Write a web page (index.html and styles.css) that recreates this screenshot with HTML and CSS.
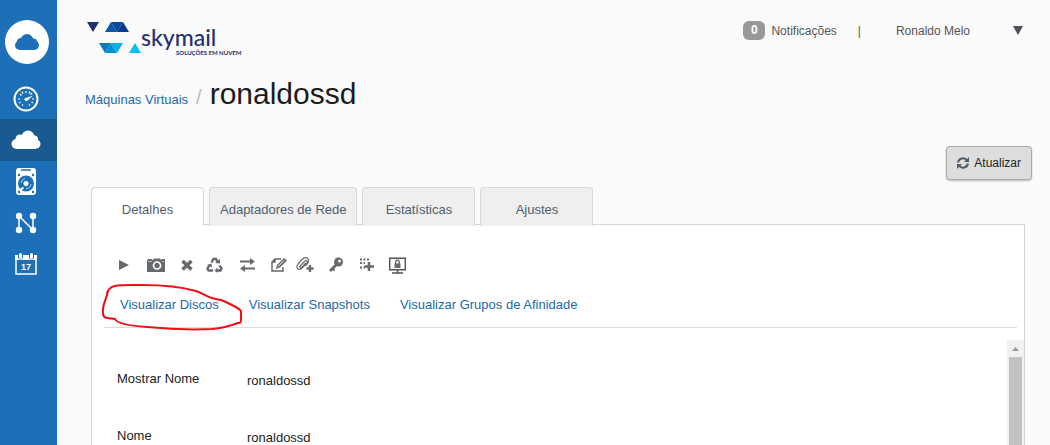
FILE: index.html
```html
<!DOCTYPE html>
<html lang="pt-BR">
<head>
    <meta charset="UTF-8">
    <meta name="viewport" content="width=device-width, initial-scale=1.0">
    <title>ronaldossd - Máquinas Virtuais</title>
    <link rel="stylesheet" href="styles.css">
</head>
<body>
    <!-- Sidebar -->
    <nav class="sidebar">
        <a class="home" href="#" aria-label="Início">
            <svg width="26" height="18" viewBox="0 0 26 18"><circle cx="13" cy="7.500" r="6.500"/><circle cx="7" cy="9" r="4"/><circle cx="19.500" cy="9" r="3.500"/><rect x="1" y="7.500" width="24" height="9.500" rx="4.700"/></svg>
        </a>
        <a class="side-link" href="#" aria-label="Painel">
            <svg width="26" height="26" viewBox="0 0 26 26">
                <circle cx="13" cy="13" r="11.500" fill="none" stroke="#fff" stroke-width="2"/>
                <path d="M5 13h2M19 13h2M13 5v2M7 8l1.500 1.500M17.500 8.500L19 7M9 5.500l1 2M17 5.500l-1 2M6 17l1.500-1M20 17l-1.500-1M9 19.500l1-1M17 19.500l-1-1" stroke="#fff" stroke-width="1.200"/>
                <path d="M11.500 12.500L20 9.500l-6 5.500a2 2 0 0 1-2.500-2.500z" fill="#fff"/>
            </svg>
        </a>
        <a class="side-link active" href="#" aria-label="Máquinas Virtuais">
            <svg width="30" height="20" viewBox="0 0 30 20" fill="#fff"><circle cx="17" cy="7" r="6.500"/><circle cx="9" cy="9" r="4.500"/><circle cx="23.500" cy="9" r="3.500"/><circle cx="5.500" cy="14" r="5"/><circle cx="25" cy="14" r="4.500"/><path d="M5 9h20v10H5z"/></svg>
        </a>
        <a class="side-link" href="#" aria-label="Discos">
            <svg width="20" height="28" viewBox="0 0 20 28">
                <rect x="0" y="0" width="20" height="27" rx="3" fill="#fff"/>
                <path d="M5 2h10" stroke="#1d70b7" stroke-width="1.500"/>
                <circle cx="10" cy="15.500" r="8" fill="#1d70b7"/>
                <circle cx="10" cy="15.500" r="2.500" fill="#fff"/>
                <path d="M5 15a5 5 0 0 1 4-4.500M15 16a5 5 0 0 1-5 4.500" fill="none" stroke="#a9c9e4"/>
                <path d="M3.500 22.500l4-3" stroke="#fff" stroke-width="2"/>
                <g fill="#1d70b7"><circle cx="3" cy="7" r="1.200"/><circle cx="17" cy="7" r="1.200"/><circle cx="3" cy="24" r="1.200"/><circle cx="17" cy="24" r="1.200"/></g>
            </svg>
        </a>
        <a class="side-link" href="#" aria-label="Redes">
            <svg width="22" height="22" viewBox="0 0 22 22">
                <path d="M4 18V4l14 14V4" fill="none" stroke="#fff" stroke-width="1.500"/>
                <g fill="#fff"><circle cx="4" cy="4" r="3.200"/><circle cx="18" cy="4" r="3.200"/><circle cx="4" cy="18" r="3.200"/><circle cx="18" cy="18" r="3.200"/></g>
            </svg>
        </a>
        <a class="side-link" href="#" aria-label="Agenda">
            <svg width="22" height="22" viewBox="0 0 22 22">
                <path d="M1 3h20v18H1z" fill="none" stroke="#fff" stroke-width="1.500"/>
                <path d="M0 2h22v5H0z" fill="#fff"/>
                <path d="M5.500 0v4M16.500 0v4" stroke="#1d70b7" stroke-width="5" stroke-linecap="round"/>
                <path d="M5.500 1.500v3M16.500 1.500v3" stroke="#fff" stroke-width="3" stroke-linecap="round"/>
                <text x="11" y="17" class="cal-day">17</text>
            </svg>
        </a>
    </nav>

    <main class="main">
        <header class="topbar">
            <a class="logo" href="#">
                <svg width="156" height="38" viewBox="0 0 156 38">
                    <path d="M0 2h12L6 12z" fill="#232f6e"/>
                    <path d="M18 12l6-10 6 10z" fill="#0b57a8"/><path d="M24 2h12l-6 10z" fill="#0c479c"/><path d="M36 2l6 10H30z" fill="#063a8a"/>
                    <path d="M12 23h12l-6 10z" fill="#1378bd"/><path d="M24 23l6 10H18z" fill="#0093d6"/><path d="M24 23h12l-6 10z" fill="#08aee5"/>
                    <path d="M42 33l6-10 6 10z" fill="#08bdf0"/>
                    <text x="54" y="26" class="logo-name">skymail</text>
                    <text x="89" y="35" class="logo-tag">SOLUÇÕES EM NUVEM</text>
                </svg>
            </a>
            <div class="user-area">
                <a class="notifications" href="#"><span class="badge">0</span>Notificações</a>
                <span class="divider">|</span>
                <button class="user-menu" type="button">Ronaldo Melo
                    <svg width="10" height="9" viewBox="0 0 10 9"><path d="M0 0h10L5 9z" fill="#4b5157"/></svg>
                </button>
            </div>
        </header>

        <div class="breadcrumb">
            <a href="#">Máquinas Virtuais</a>
            <span class="slash">/</span>
            <h1>ronaldossd</h1>
        </div>

        <div class="actions">
            <button class="refresh" type="button">
                <svg width="12" height="12" viewBox="0 0 12 12"><path d="M1 5.500a5 5 0 0 1 9-2M11 6.500a5 5 0 0 1-9 2" fill="none" stroke="#4f5d6b" stroke-width="2"/><path d="M12 0v5H7zM0 12V7h5z" fill="#4f5d6b"/></svg>
                Atualizar
            </button>
        </div>

        <nav class="tabs">
            <a class="tab selected" href="#">Detalhes</a>
            <a class="tab" href="#">Adaptadores de Rede</a>
            <a class="tab" href="#">Estatísticas</a>
            <a class="tab" href="#">Ajustes</a>
        </nav>

        <section class="panel">
            <div class="panel-head">
                <div class="toolbar">
                    <button type="button" aria-label="Iniciar"><svg width="10" height="16" viewBox="0 0 10 16"><path d="M0 3l10 5-10 5z"/></svg></button>
                    <button type="button" aria-label="Snapshot"><svg width="18" height="16" viewBox="0 0 18 16"><path d="M0 3h1V2h4v1h1l1-1.500h6L14 3l1-1h3v13H0z"/><circle cx="10" cy="8.500" r="3.500" fill="#66696d" stroke="#fff" stroke-width="1.700"/><path d="M1 4.500h4M15 4.500h2" stroke="#b5b7b9"/></svg></button>
                    <button type="button" aria-label="Desligar"><svg width="12" height="16" viewBox="0 0 12 16"><path d="M1.500 4l9 8.500M10.500 4l-9 8.500" stroke="#66696d" stroke-width="3.600"/></svg></button>
                    <button type="button" aria-label="Reinstalar">
                        <svg width="17" height="16" viewBox="0 0 17 16"><g fill="none" stroke="#66696d" stroke-width="2.400"><path d="M5.500 5.500l2-3.500h2.500l1.500 2.500"/><path d="M13.500 8.500l2 3-1 2H11"/><path d="M7 13.500H2.500l-1-2L3.500 8"/></g><path d="M9 6l5 .5V2zM11.500 10.500v5.500l-3-2.500zM1 8l4.500-1.500.5 4z"/></svg>
                    </button>
                    <button type="button" aria-label="Migrar"><svg width="15" height="16" viewBox="0 0 15 16"><path d="M0 4.500h11M4 11.500h11" stroke="#66696d" stroke-width="2"/><path d="M10 1l5 3.500L10 8zM5 8l-5 3.500L5 15z"/></svg></button>
                    <button type="button" aria-label="Editar"><svg width="16" height="16" viewBox="0 0 16 16"><path d="M10 2H4L1 5v9h11v-4M4 2v3H1" fill="none" stroke="#66696d" stroke-width="1.500"/><path d="M5 12l1-4 7-7 3 2.500-7 7z"/><path d="M7 9.500l6-6" stroke="#fff"/></svg></button>
                    <button type="button" aria-label="Anexar ISO"><svg width="19" height="16" viewBox="0 0 19 16"><path d="M5 9l4.500-4.500c2-2 4 0 2 2L7 11c-3 3-7 0-4-4l4-4.500c4-4 9 0 5.500 4L10 9M5 9c-1 1.500 1 2 2 1l4-4" fill="none" stroke="#66696d" stroke-width="1.200"/><path d="M15 8v7M11.500 11.500h7" stroke="#66696d" stroke-width="2.300"/></svg></button>
                    <button type="button" aria-label="Redefinir senha"><svg width="14" height="16" viewBox="0 0 14 16"><circle cx="9.500" cy="5" r="4.500"/><path d="M7.500 7.500L1 14" stroke="#66696d" stroke-width="2.800"/><path d="M3.500 11.500l2 2" stroke="#66696d" stroke-width="2"/><circle cx="10.500" cy="4" r="1.500" fill="#fff"/></svg></button>
                    <button type="button" aria-label="Alterar oferta"><svg width="14" height="16" viewBox="0 0 14 16"><path d="M0 2.500h10M0 6h5M0 10.500h5" stroke="#66696d" stroke-width="2" stroke-dasharray="2 1.500"/><path d="M9 5v9M4.500 9.500h9.500" stroke="#66696d" stroke-width="2.600"/></svg></button>
                    <button type="button" aria-label="Abrir console"><svg width="17" height="17" viewBox="0 0 17 17"><path d="M.7 1.200h15.600v11.500H.7z" fill="none" stroke="#505458" stroke-width="1.400"/><path d="M8.500 12v4M3 16h11" stroke="#505458" stroke-width="1.500"/><path d="M5.500 6.500h6v4.500h-6z"/><path d="M6.700 7V5a1.800 1.800 0 0 1 3.600 0v2" fill="none" stroke="#505458" stroke-width="1.200"/></svg></button>
                </div>
                <div class="view-links">
                    <a class="circled" href="#">Visualizar Discos
                        <svg class="scribble" width="142" height="50" viewBox="0 0 142 50"><path d="M5 11C8 2 15 3 40 3c25 0 40 2 54 6 9 3 12 8 25 9 7 3 18 8 20 11v8c0 3 0 4-3 4-8 3-14 5-26 6-20 1-45 0-65-2-15-1-30-3-32-8-8-1-12 0-12-6-1-9 3-12 5-22"/></svg>
                    </a>
                    <a href="#">Visualizar Snapshots</a>
                    <a href="#">Visualizar Grupos de Afinidade</a>
                </div>
            </div>
            <div class="details">
                <dl class="fields">
                    <div class="field"><dt>Mostrar Nome</dt><dd>ronaldossd</dd></div>
                    <div class="field"><dt>Nome</dt><dd>ronaldossd</dd></div>
                </dl>
                <div class="scrollbar">
                    <svg width="7" height="4" viewBox="0 0 7 4"><path d="M0 4h7L3.500 0z" fill="#999"/></svg>
                    <div class="thumb"></div>
                </div>
            </div>
        </section>
    </main>
</body>
</html>
```

FILE: styles.css
```css
/* General */
* {
    box-sizing: border-box;
}

body {
    margin: 0;
    height: 100vh;
    overflow: hidden;
    display: flex;
    background: #fafafa;
    color: #222;
    font-family: "Liberation Sans", Arial, sans-serif;
    font-size: 13px;
    line-height: 16px;
}

a {
    color: #1a6aab;
    text-decoration: none;
}

button {
    font: inherit;
    padding: 0;
    border: none;
    background: none;
    cursor: pointer;
}

svg {
    display: block;
}

/* Sidebar */
.sidebar {
    width: 57px;
    flex: none;
    background: #1d70b7;
    padding-top: 20px;
}

.home {
    display: flex;
    align-items: center;
    justify-content: center;
    width: 44px;
    height: 44px;
    margin: 0 0 14px 5px;
    border-radius: 50%;
    background: #fff;
    fill: #1d70b7;
}

.side-link {
    display: flex;
    align-items: center;
    justify-content: center;
    height: 41px;
    padding-right: 5px;
}

.side-link.active {
    height: 42px;
    background: #195a92;
}

.cal-day {
    font-size: 9px;
    font-weight: bold;
    fill: #fff;
    text-anchor: middle;
}

/* Main column */
.main {
    flex: 1;
    min-width: 0;
    display: flex;
    flex-direction: column;
}

.topbar {
    display: flex;
    justify-content: space-between;
    align-items: flex-start;
    padding: 20px 27px 0 30px;
}

.logo-name {
    font-family: Lato, sans-serif;
    font-size: 23px;
    font-weight: 500;
    fill: #232f6e;
}

.logo-tag {
    font-family: Lato, sans-serif;
    font-size: 6px;
    font-weight: bold;
    fill: #232f6e;
}

.user-area {
    display: flex;
    align-items: center;
    padding-top: 1px;
    color: #555;
    font-size: 12px;
}

.notifications {
    display: flex;
    align-items: center;
    gap: 6px;
    color: #555;
}

.badge {
    width: 22px;
    padding: 1px 0 2px;
    border-radius: 6px;
    background: #999;
    color: #fff;
    font-weight: bold;
    text-align: center;
}

.divider {
    margin: 0 35px 0 21px;
}

.user-menu {
    display: flex;
    align-items: center;
    gap: 43px;
    color: #555;
}

.breadcrumb {
    display: flex;
    align-items: baseline;
    padding: 18px 28px 0;
}

.slash {
    margin: 0 8px;
    color: #bbb;
    font-size: 20px;
}

h1 {
    margin: 0;
    font-size: 30px;
    line-height: 36px;
    font-weight: normal;
    color: #1c1c1c;
}

.actions {
    display: flex;
    justify-content: flex-end;
    padding: 34px 18px 0;
}

.refresh {
    display: flex;
    align-items: center;
    gap: 5px;
    height: 34px;
    padding: 0 10px;
    border: 1px solid #aaa;
    border-radius: 4px;
    background: #ddd;
    box-shadow: 0 1px 2px rgba(0, 0, 0, 0.25);
    color: #222;
    font-size: 12px;
}

/* Tabs */
.tabs {
    display: flex;
    gap: 5px;
    padding: 7px 25px 0 34px;
    margin-bottom: -2px;
    z-index: 1;
}

.tab {
    min-width: 113px;
    height: 39px;
    padding: 14px 10px 0;
    border: 1px solid #d8d8d8;
    border-bottom: none;
    border-radius: 4px 4px 0 0;
    background: #efefef;
    color: #4f5d6e;
    text-align: center;
}

.tab.selected {
    background: #fff;
}

/* Panel */
.panel {
    flex: 1;
    min-height: 0;
    display: flex;
    flex-direction: column;
    margin: 0 25px 0 34px;
    border: 1px solid #d4d4d4;
    border-bottom: none;
    background: #fff;
}

.panel-head {
    margin: 0 7px 0 12px;
    padding: 32px 15px 14px;
    border-bottom: 1px solid #ddd;
}

.toolbar {
    display: grid;
    grid-template-columns: 28px 34px 25px 34px 31px 24px 34px 31px 29px 17px;
    justify-items: start;
    align-items: start;
}

.toolbar svg {
    fill: #66696d;
}

.view-links {
    display: flex;
    gap: 30px;
    margin-top: 23px;
    padding-left: 1px;
}

.circled {
    position: relative;
}

.scribble {
    position: absolute;
    top: -15px;
    left: -18px;
    fill: none;
    stroke: #f20d16;
    stroke-width: 2;
    stroke-linecap: round;
    pointer-events: none;
}

.details {
    flex: 1;
    min-height: 0;
    display: flex;
    margin-top: 12px;
}

.fields {
    flex: 1;
    margin: 0;
    padding: 31px 25px 0;
    overflow: hidden;
}

.field {
    display: flex;
    align-items: flex-start;
    height: 57px;
}

.field dt {
    width: 130px;
}

.field dd {
    margin: 0;
    padding-top: 2px;
}

.scrollbar {
    width: 17px;
    display: flex;
    flex-direction: column;
    align-items: center;
    gap: 6px;
    padding-top: 7px;
    background: #f1f1f1;
}

.thumb {
    flex: 1;
    width: 13px;
    background: #c1c1c1;
}
```
